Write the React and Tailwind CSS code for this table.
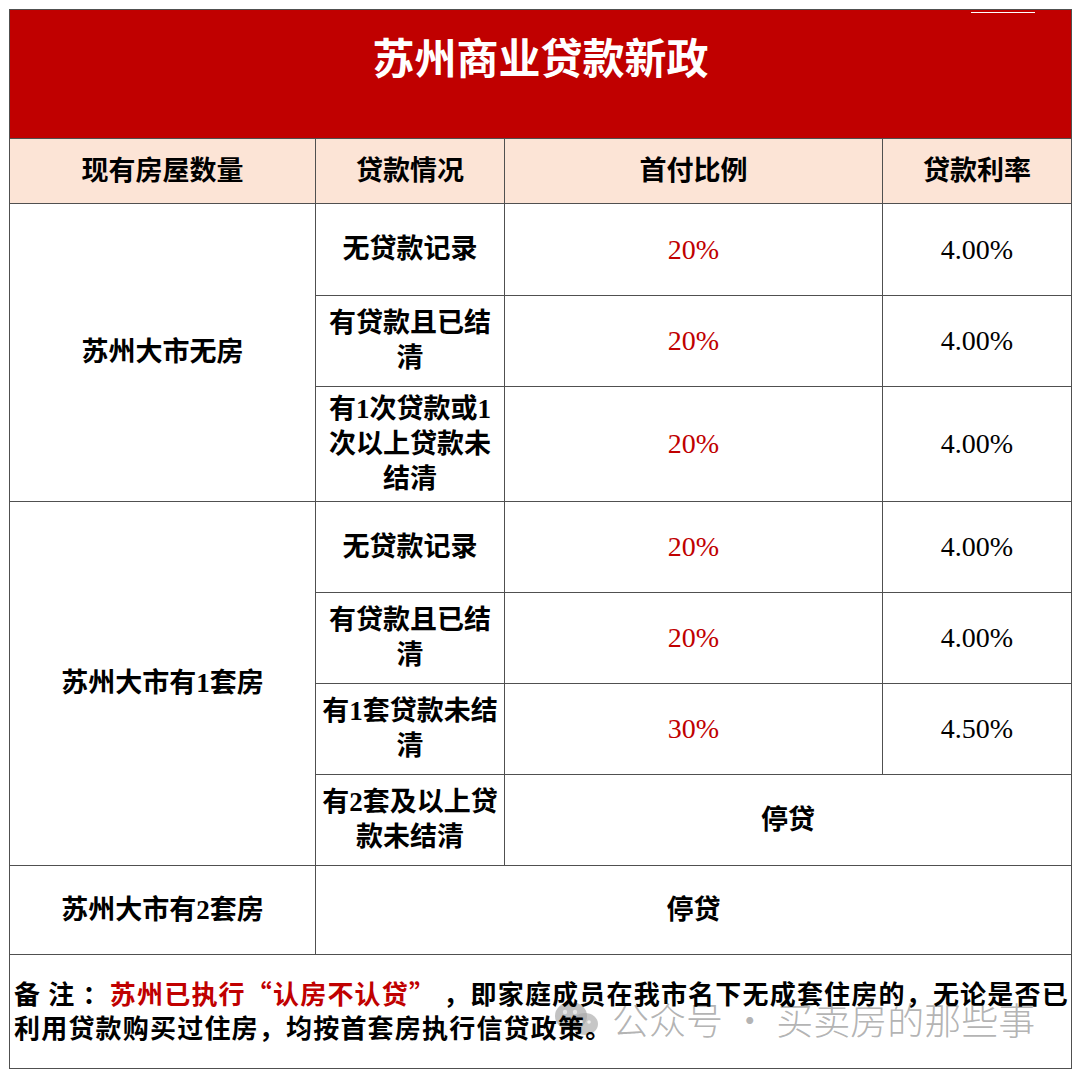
import React from 'react'

const line = 'border-r border-b border-[#505050]'
const serif = "font-['Liberation_Serif','Noto_Sans_CJK_SC',serif]"
const sans = "font-['Noto_Sans_CJK_SC','Noto_Sans',sans-serif]"

const Cell = ({ children, className = '' }) => (
    <div className={`${line} flex items-center justify-center text-center ${className}`}>
        {children}
    </div>
)

const Label = ({ children }) => (
    <Cell className={`${serif} px-1 text-[27px] leading-[35px] font-bold text-black`}>
        <span>{children}</span>
    </Cell>
)

const Pct = ({ children }) => (
    <Cell className={`${serif} text-[28px] text-[#c00000]`}>{children}</Cell>
)

const Rate = ({ children }) => (
    <Cell className={`${serif} text-[28px] text-black`}>{children}</Cell>
)

const WeChatMark = () => (
    <svg width="46" height="40" viewBox="0 0 46 40">
        <ellipse cx="17" cy="17" rx="16" ry="14" fill="#9a9a9a" opacity="0.6" />
        <path d="M8 28 L6 35 L14 30 Z" fill="#9a9a9a" opacity="0.6" />
        <ellipse cx="31" cy="25" rx="13" ry="11" fill="#a8a8a8" opacity="0.65" />
        <path d="M38 33 L41 38 L34 35 Z" fill="#a8a8a8" opacity="0.65" />
        <circle cx="11" cy="13" r="2.2" fill="#e6e6e6" />
        <circle cx="21" cy="13" r="2.2" fill="#e6e6e6" />
        <circle cx="27" cy="23" r="1.8" fill="#eeeeee" />
        <circle cx="35" cy="23" r="1.8" fill="#eeeeee" />
    </svg>
)

const App = () => {
    return (
        <div className="w-[1080px] h-[1077px] bg-white pt-[9px] pl-[9px]">
            <div className="w-[1063px] border-l border-t border-[#505050] grid grid-cols-[306px_189px_378px_189px] grid-rows-[129px_65px_92px_91px_115px_91px_91px_91px_91px_89px_114px]">
                <div className={`${line} col-span-4 bg-[#c00000] relative flex justify-center pt-[29px]`}>
                    <h1 className={`${serif} text-[42px] leading-[42px] font-bold text-white`}>苏州商业贷款新政</h1>
                    <div className="absolute top-[2px] right-[36px] w-[64px] h-px bg-white" />
                </div>

                <Cell className={`${serif} bg-[#fce4d6] text-[27px] font-bold`}>现有房屋数量</Cell>
                <Cell className={`${serif} bg-[#fce4d6] text-[27px] font-bold`}>贷款情况</Cell>
                <Cell className={`${serif} bg-[#fce4d6] text-[27px] font-bold`}>首付比例</Cell>
                <Cell className={`${serif} bg-[#fce4d6] text-[27px] font-bold`}>贷款利率</Cell>

                <Cell className={`${serif} row-span-3 text-[27px] font-bold`}>苏州大市无房</Cell>
                <Label>无贷款记录</Label>
                <Pct>20%</Pct>
                <Rate>4.00%</Rate>

                <Label>有贷款且已结清</Label>
                <Pct>20%</Pct>
                <Rate>4.00%</Rate>

                <Label>有1次贷款或1次以上贷款未结清</Label>
                <Pct>20%</Pct>
                <Rate>4.00%</Rate>

                <Cell className={`${serif} row-span-4 text-[27px] font-bold`}>苏州大市有1套房</Cell>
                <Label>无贷款记录</Label>
                <Pct>20%</Pct>
                <Rate>4.00%</Rate>

                <Label>有贷款且已结清</Label>
                <Pct>20%</Pct>
                <Rate>4.00%</Rate>

                <Label>有1套贷款未结清</Label>
                <Pct>30%</Pct>
                <Rate>4.50%</Rate>

                <Label>有2套及以上贷款未结清</Label>
                <Cell className={`${serif} col-span-2 text-[27px] font-bold`}>停贷</Cell>

                <Cell className={`${serif} text-[27px] font-bold`}>苏州大市有2套房</Cell>
                <Cell className={`${serif} col-span-3 text-[27px] font-bold`}>停贷</Cell>

                <div className={`${line} col-span-4 relative flex flex-col justify-center pl-[4px] pb-[4px]`}>
                    <div className="absolute left-[544px] top-[44px] flex items-center gap-[12px]">
                        <WeChatMark />
                        <span className={`${sans} text-[37px] leading-[40px] font-light text-[#a0a0a0]/80 whitespace-nowrap`}>
                            公众号 · 买卖房的那些事
                        </span>
                    </div>
                    <p className={`${sans} relative text-[26px] leading-[34px] tracking-[1.2px] font-bold text-black whitespace-nowrap`}>
                        备 注 ：<span className="text-[#c00000]">苏州已执行“认房不认贷”</span> ，即家庭成员在我市名下无成套住房的，无论是否已
                    </p>
                    <p className={`${sans} relative text-[26px] leading-[34px] tracking-[1.2px] font-bold text-black whitespace-nowrap`}>
                        利用贷款购买过住房，均按首套房执行信贷政策。
                    </p>
                </div>
            </div>
        </div>
    )
}

export default App
